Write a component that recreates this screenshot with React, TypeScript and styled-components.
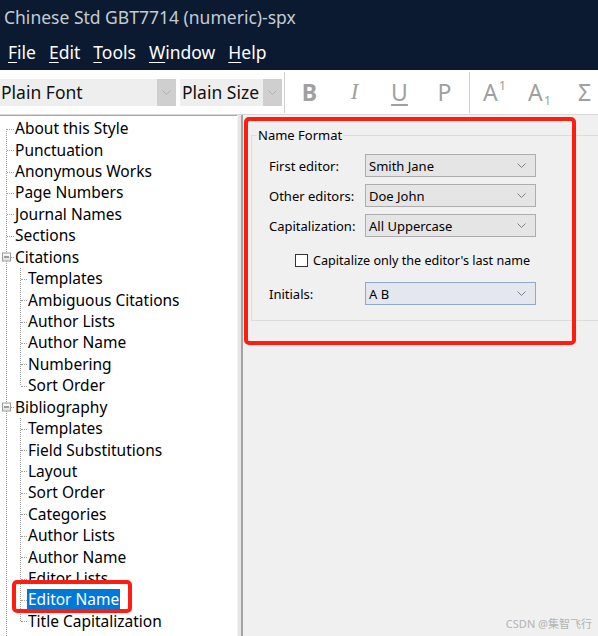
import React from 'react'
import styled, { createGlobalStyle } from 'styled-components'

const GlobalStyle = createGlobalStyle`
    html, body {
        margin: 0;
        padding: 0;
        background: #f0f0f0;
        overflow: hidden;
    }
    * {
        box-sizing: border-box;
    }
`

const WindowStyled = styled.div`
    position: relative;
    width: 598px;
    height: 636px;
    display: flex;
    flex-direction: column;
    overflow: hidden;
    font-family: "Noto Sans", sans-serif;
    background: #f0f0f0;
`

const TitleBar = styled.div`
    height: 34px;
    background: #0b1a30;
    color: #c5cbd4;
    font-size: 17.5px;
    padding-left: 4px;
    display: flex;
    align-items: center;
`

const MenuBar = styled.div`
    height: 36px;
    background: #0b1a30;
    color: #ffffff;
    font-size: 17.5px;
    padding-left: 8px;
    display: flex;
    align-items: center;
    column-gap: 13px;
`

const MenuItem = styled.span`
    u {
        text-decoration-thickness: 1px;
        text-underline-offset: 3px;
    }
`

const Toolbar = styled.div`
    height: 45px;
    background: #ffffff;
    border-bottom: 1px solid #d8d8d8;
    display: flex;
    align-items: center;
`

const Combo = styled.div<{ $width: number, $gap?: number }>`
    flex: none;
    width: ${p => p.$width}px;
    height: 27px;
    margin-left: ${p => p.$gap ?? 0}px;
    background: #eeeeee;
    display: flex;
    align-items: center;
    justify-content: space-between;
    font-size: 17.5px;
    color: #111;
    padding-left: ${p => p.$gap ? 2 : 1}px;
`

const ComboArrow = styled.div`
    width: 19px;
    height: 27px;
    background: #cfcfcf;
    display: flex;
    align-items: center;
    justify-content: center;
`

const ToolSep = styled.div`
    flex: none;
    width: 1px;
    height: 41px;
    background: #d0d0d0;
    margin: 0 2px;
`

const ToolButton = styled.div<{ $italic?: boolean, $bold?: boolean, $underline?: boolean }>`
    flex: none;
    width: 45px;
    height: 40px;
    display: flex;
    align-items: center;
    justify-content: center;
    color: #a0a0a0;
    font-size: 23px;
    font-family: ${p => p.$italic ? '"Liberation Serif", serif' : '"Noto Sans", sans-serif'};
    font-style: ${p => p.$italic ? 'italic' : 'normal'};
    font-weight: ${p => p.$bold ? 700 : 400};
    text-decoration: ${p => p.$underline ? 'underline' : 'none'};
    text-decoration-thickness: 2px;
    text-underline-offset: 3px;
`

const Index = styled.span<{ $up: boolean }>`
    display: inline-block;
    font-size: 13px;
    margin-left: 1px;
    transform: translateY(${p => p.$up ? -7 : 8}px);
`

const Body = styled.div`
    flex: 1;
    display: flex;
    min-height: 0;
`

const TreePane = styled.div`
    position: relative;
    width: 237px;
    background: #ffffff;
    border-top: 1px solid #a8a8a8;
    padding-top: 2px;
    &::before {
        content: '';
        position: absolute;
        left: 6px;
        top: 13px;
        bottom: 0;
        border-left: 1px dotted #a0a0a0;
    }
`

const Splitter = styled.div`
    width: 6px;
    background: #e6e6e6;
    border-right: 2px solid #a3a3a3;
    border-left: 1px solid #f4f4f4;
`

const Row = styled.div<{ $level: number }>`
    position: relative;
    height: 21.43px;
    display: flex;
    align-items: center;
    padding-left: ${p => p.$level === 0 ? 15 : 28}px;
    font-size: 15.5px;
    color: #000;
    white-space: nowrap;
    &::before {
        content: '';
        position: absolute;
        left: ${p => p.$level === 0 ? 7 : 21}px;
        width: ${p => p.$level === 0 ? 7 : 6}px;
        top: 50%;
        border-top: 1px dotted #a0a0a0;
    }
`

const ChildGroup = styled.div`
    position: relative;
    &::before {
        content: '';
        position: absolute;
        left: 20px;
        top: 0;
        bottom: 11px;
        border-left: 1px dotted #a0a0a0;
    }
`

const Expander = styled.span`
    position: absolute;
    left: 2px;
    top: 50%;
    transform: translateY(-50%);
    width: 9px;
    height: 9px;
    border: 1px solid #9a9a9a;
    background: linear-gradient(#ffffff, #dcdcdc);
    z-index: 1;
    &::after {
        content: '';
        position: absolute;
        left: 1px;
        right: 1px;
        top: 3px;
        border-top: 1px solid #4a4a4a;
    }
`

const RowText = styled.span<{ $selected?: boolean }>`
    background: ${p => p.$selected ? '#0078d7' : 'transparent'};
    color: ${p => p.$selected ? '#ffffff' : '#000'};
    padding: 0 1px;
    margin-left: -1px;
    line-height: 21px;
`

const Panel = styled.div`
    flex: 1;
    background: #f0f0f0;
    padding: 11px 0 0 8px;
    overflow: hidden;
`

const GroupBox = styled.fieldset`
    width: 360px;
    margin: 0;
    border: 1px solid #dcdcdc;
    padding: 0 0 15px 17px;
    font-size: 13px;
    color: #000;
    legend {
        margin-left: -12px;
        padding: 0 1px;
        line-height: 18px;
    }
`

const FormGrid = styled.div`
    margin-top: 10px;
    display: grid;
    grid-template-columns: 96px 171px;
    row-gap: 7px;
    align-items: center;
`

const FieldLabel = styled.span`
    font-size: 13px;
`

const Select = styled.div<{ $focused?: boolean }>`
    height: 23px;
    background: ${p => p.$focused ? '#e4e8ee' : '#e5e5e5'};
    border: 1px solid ${p => p.$focused ? '#8ea8c8' : '#adadad'};
    display: flex;
    align-items: center;
    justify-content: space-between;
    padding: 0 9px 0 3px;
    font-size: 13px;
`

const CheckRow = styled.label`
    grid-column: 1 / span 2;
    height: 30px;
    padding-left: 26px;
    display: flex;
    align-items: center;
    column-gap: 5px;
    font-size: 12.6px;
    white-space: nowrap;
    margin-top: 1px;
`

const CheckBox = styled.span`
    flex: none;
    width: 13px;
    height: 13px;
    border: 1px solid #333;
    background: #fff;
`

const Annotation = styled.div<{ $left: number, $top: number, $width: number, $height: number, $thick: number }>`
    position: absolute;
    left: ${p => p.$left}px;
    top: ${p => p.$top}px;
    width: ${p => p.$width}px;
    height: ${p => p.$height}px;
    border: ${p => p.$thick}px solid #ff1d12;
    border-radius: 5px;
    pointer-events: none;
`

const Watermark = styled.div`
    position: absolute;
    right: 6px;
    bottom: 5px;
    font-size: 11px;
    color: #b3b3b3;
    font-family: "Noto Sans", "Noto Sans CJK SC", sans-serif;
`

const Chevron = ({ color }: { color: string }) => (
    <svg width="9" height="5" viewBox="0 0 9 5">
        <path d="M0.5 0.5 L4.5 4.5 L8.5 0.5" fill="none" stroke={color} strokeWidth="1" />
    </svg>
)

interface TreeNode {
    label: string,
    children?: string[],
}

const treeData: TreeNode[] = [
    { label: 'About this Style' },
    { label: 'Punctuation' },
    { label: 'Anonymous Works' },
    { label: 'Page Numbers' },
    { label: 'Journal Names' },
    { label: 'Sections' },
    { label: 'Citations', children: ['Templates', 'Ambiguous Citations', 'Author Lists', 'Author Name', 'Numbering', 'Sort Order'] },
    { label: 'Bibliography', children: ['Templates', 'Field Substitutions', 'Layout', 'Sort Order', 'Categories', 'Author Lists', 'Author Name', 'Editor Lists', 'Editor Name', 'Title Capitalization'] },
]

const selected = 'Bibliography/Editor Name'

const fields = [
    { label: 'First editor:', value: 'Smith Jane' },
    { label: 'Other editors:', value: 'Doe John' },
    { label: 'Capitalization:', value: 'All Uppercase' },
]

export default function App() {
    return (
        <WindowStyled>
            <GlobalStyle />
            <TitleBar>Chinese Std GBT7714 (numeric)-spx</TitleBar>
            <MenuBar>
                <MenuItem><u>F</u>ile</MenuItem>
                <MenuItem><u>E</u>dit</MenuItem>
                <MenuItem><u>T</u>ools</MenuItem>
                <MenuItem><u>W</u>indow</MenuItem>
                <MenuItem><u>H</u>elp</MenuItem>
            </MenuBar>
            <Toolbar>
                <Combo $width={176}>
                    Plain Font
                    <ComboArrow><Chevron color='#b0b0b0' /></ComboArrow>
                </Combo>
                <Combo $width={102} $gap={4}>
                    Plain Size
                    <ComboArrow><Chevron color='#b0b0b0' /></ComboArrow>
                </Combo>
                <ToolSep />
                <ToolButton $bold>B</ToolButton>
                <ToolButton $italic>I</ToolButton>
                <ToolButton $underline>U</ToolButton>
                <ToolButton>P</ToolButton>
                <ToolSep />
                <ToolButton>A<Index $up>1</Index></ToolButton>
                <ToolButton>A<Index $up={false}>1</Index></ToolButton>
                <ToolButton>Σ</ToolButton>
            </Toolbar>
            <Body>
                <TreePane>
                    {treeData.map(node => (
                        <React.Fragment key={node.label}>
                            <Row $level={0}>
                                {node.children && <Expander />}
                                <RowText>{node.label}</RowText>
                            </Row>
                            {node.children && (
                                <ChildGroup>
                                    {node.children.map(child => (
                                        <Row key={child} $level={1}>
                                            <RowText $selected={`${node.label}/${child}` === selected}>{child}</RowText>
                                        </Row>
                                    ))}
                                </ChildGroup>
                            )}
                        </React.Fragment>
                    ))}
                </TreePane>
                <Splitter />
                <Panel>
                    <GroupBox>
                        <legend>Name Format</legend>
                        <FormGrid>
                            {fields.map(f => (
                                <React.Fragment key={f.label}>
                                    <FieldLabel>{f.label}</FieldLabel>
                                    <Select>{f.value}<Chevron color='#808080' /></Select>
                                </React.Fragment>
                            ))}
                            <CheckRow>
                                <CheckBox />
                                Capitalize only the editor's last name
                            </CheckRow>
                            <FieldLabel>Initials:</FieldLabel>
                            <Select $focused>A B<Chevron color='#808080' /></Select>
                        </FormGrid>
                    </GroupBox>
                </Panel>
            </Body>
            <Annotation $left={244} $top={117} $width={332} $height={228} $thick={4} />
            <Annotation $left={12} $top={580} $width={120} $height={33} $thick={4} />
            <Watermark>CSDN @集智飞行</Watermark>
        </WindowStyled>
    )
}
